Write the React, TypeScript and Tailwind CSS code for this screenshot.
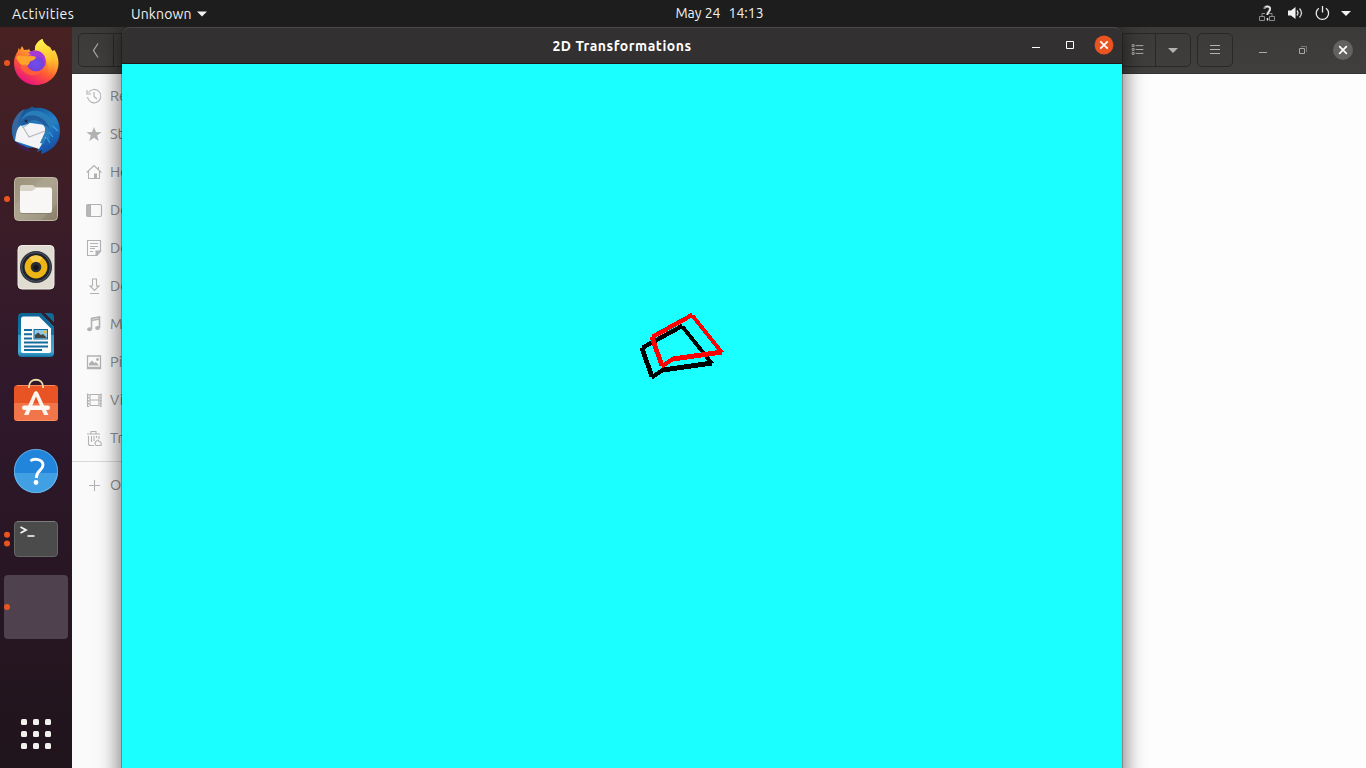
import type { ReactNode } from "react";

const ui = "font-['Ubuntu','Noto_Sans',sans-serif]";

type Point = [number, number];

const originalShape: Point[] = [[642, 348], [682, 326], [711.5, 363], [663, 370], [652, 377]];
const movedShape: Point[] = [[652, 337], [692, 315], [721.5, 352], [673, 359], [662, 366]];

/* Wide lines widen along x when steep and along y when shallow. */
function Loop({ points, color }: { points: Point[]; color: string }) {
  return (
    <g fill={color}>
      {points.map(([x1, y1], i) => {
        const [x2, y2] = points[(i + 1) % points.length];
        const steep = Math.abs(y2 - y1) > Math.abs(x2 - x1);
        const dx = steep ? 2.5 : 0;
        const dy = steep ? 0 : 2.5;
        return (
          <polygon
            key={i}
            points={`${x1 - dx},${y1 - dy} ${x2 - dx},${y2 - dy} ${x2 + dx},${y2 + dy} ${x1 + dx},${y1 + dy}`}
          />
        );
      })}
    </g>
  );
}

function Slot({ y, dots = 0, active = false, children }: { y: number; dots?: number; active?: boolean; children?: ReactNode }) {
  return (
    <div className={active ? "h-16 w-16 shrink-0 rounded bg-[#4f414e]" : "h-16 w-16 shrink-0"}>
      <svg width="64" height="64" viewBox={`4 ${y} 64 64`} className="block overflow-visible">
        {children}
        {dots === 1 && <circle cx="7" cy={y + 32} r="3" fill="#e95420" />}
        {dots === 2 && (
          <>
            <circle cx="7" cy={y + 27.7} r="3" fill="#e95420" />
            <circle cx="7" cy={y + 36.4} r="3" fill="#e95420" />
          </>
        )}
      </svg>
    </div>
  );
}

function Dock() {
  return (
    <nav className="flex w-[72px] shrink-0 flex-col items-center gap-1 bg-linear-to-b from-[#482122] via-[#2f182b] via-50% to-[#20141b] pt-1">
      <Slot y={31} dots={1}>
        <defs>
          <linearGradient id="fx" x1="0.85" y1="0" x2="0.3" y2="1">
            <stop offset="0" stopColor="#fff44f" />
            <stop offset="0.35" stopColor="#ffb52b" />
            <stop offset="0.65" stopColor="#ff5a33" />
            <stop offset="1" stopColor="#e80d86" />
          </linearGradient>
          <linearGradient id="fxt" x1="0.4" y1="0" x2="0.6" y2="1">
            <stop offset="0" stopColor="#fff34d" />
            <stop offset="0.6" stopColor="#ffc22e" />
            <stop offset="1" stopColor="#ff7a2c" stopOpacity="0.2" />
          </linearGradient>
          <radialGradient id="fxp" cx="0.5" cy="0.6" r="0.6">
            <stop offset="0" stopColor="#6b50f0" />
            <stop offset="0.6" stopColor="#7542d8" />
            <stop offset="1" stopColor="#b833e1" />
          </radialGradient>
        </defs>
        <path d="M21.5 47C22 45.500 22.500 46 24 50C25.500 49.500 27 50 28 50L29 48.500L30 51C32 51 33.500 51 35 50C34.500 45 38 41 42.500 39C43 42.500 46 45 50 47C51 49 52 50 52.500 51L54.500 50C57 54 58.500 58 58.500 63C58.500 75.500 48.500 85 36 85C24 85 14 75.500 14 63C14 58 15.500 55 18 51L18.500 48L20 50Z" fill="url(#fx)" />
        <path d="M35 50C34.500 45 38 41 42.500 39C43 43 47 46 50 49C56 57 55 67 47 76C51 66 47 56 35 50Z" fill="url(#fxt)" />
        <circle cx="36" cy="62" r="9.500" fill="url(#fxp)" />
        <path d="M28 53C33 49 41 50 44.500 56C47 61 45 67 45 67C45 61 42 56 37 57Z" fill="#a738d8" />
        <path d="M16 57C20 54 25 56 28 56.500C31 55 34 56.500 36 57C36 59 33 60.500 30 61.500C29 65 27 66 25 66C21 66 18 62 16 57Z" fill="#ffa42a" />
        <path d="M26 64C28 71 36 74 43 69C38 78 24 77 20 66Z" fill="#ff6538" opacity="0.75" />
      </Slot>
      <Slot y={99}>
        <defs>
          <linearGradient id="tb" x1="0.2" y1="0" x2="0.8" y2="1">
            <stop offset="0" stopColor="#154b8c" />
            <stop offset="0.5" stopColor="#2380ca" />
            <stop offset="1" stopColor="#17499e" />
          </linearGradient>
        </defs>
        <path d="M30 108L32 106.500L35 108C48 106 60 116 60 131C60 143 52 151 41 154L42 150L37 152L39 146C29 150 21 147 14 140C9 127 13 112 30 108Z" fill="url(#tb)" />
        <path d="M16 142C19 148 25 151.500 31 152L26 147Z" fill="#402054" />
        <path d="M12 129C13 120 18 111 25 109C20 116 17 122 18 130L14 136Z" fill="#39669d" />
        <path d="M19 127L24 122L45 125L46 137L39 149L15 141C16 136 16 131 19 127Z" fill="#f4f4f6" />
        <path d="M23 127L29 137L45 131" stroke="#b4b7bd" strokeWidth="1.100" fill="none" />
        <path d="M23 117C28 109 39 109 47 115C52 119 54 122 56 121L58 124L51 124L56 129L48 127L50 139L45 137L44 144L40 143L45 132C47 124 38 121 31 122L23 128C20 123 21 119 23 117Z" fill="#297eb9" />
        <path d="M24 118C30 113 39 115 45 121L50 128L44 125C37 119 31 119 27 124L21 126C20 122 22 119 24 118Z" fill="#205c9e" />
        <path d="M21 126L28 124L23 128Z" fill="#b8d3e5" /><circle cx="26" cy="121" r="1.500" fill="#182d51" />
        <path d="M49 132L53 137M47 138L50 143M53 126L58 131" stroke="#2ea5df" strokeWidth="1.200" />
      </Slot>
      <Slot y={167} dots={1}>
        <defs>
          <linearGradient id="fm" x1="0" y1="0" x2="1" y2="1">
            <stop offset="0" stopColor="#9c927b" />
            <stop offset="0.5" stopColor="#a9a08b" />
            <stop offset="1" stopColor="#887e69" />
          </linearGradient>
        </defs>
        <rect x="14.500" y="177.500" width="43" height="43" rx="4" fill="url(#fm)" stroke="#c0b8a5" strokeWidth="1" />
        <path d="M15 205L43 178H57V204L41 220H15Z" fill="#bdb5a3" opacity="0.25" />
        <path d="M20 200V187Q20 185 22 185H32Q34 185 35 187H50Q52 187 52 190V200Z" fill="#d9d3c6" />
        <path d="M20 191H31Q33 191 34 189.500Q35 188 37 188H50Q52 188 52 190V210Q52 213 49.500 213H22.500Q20 213 20 210Z" fill="#f8f7f5" />
        <path d="M21 213.500H51" stroke="#7a725f" opacity="0.6" />
      </Slot>
      <Slot y={235}>
        <rect x="18" y="245.500" width="36" height="43.500" rx="4" fill="#e1dcd2" stroke="#f0ede7" />
        <circle cx="36" cy="267" r="16" fill="#30363e" />
        <circle cx="36" cy="267" r="14.400" fill="#1d222e" stroke="#59606a" strokeWidth="0.800" />
        <circle cx="36" cy="267" r="11.400" fill="#edb514" />
        <path d="M29.500 257.500A11.400 11.400 0 0 1 42.500 257.500L36 267Z" fill="#f8cf4b" />
        <circle cx="36" cy="267" r="5.300" fill="#2b2d32" /><circle cx="36" cy="267.500" r="2.700" fill="#15171b" />
      </Slot>
      <Slot y={303}>
        <defs>
          <linearGradient id="wr" x1="0" y1="0" x2="0" y2="1">
            <stop offset="0" stopColor="#0d6594" />
            <stop offset="0.490" stopColor="#1475a5" />
            <stop offset="0.500" stopColor="#3498c5" />
            <stop offset="0.880" stopColor="#48a8d2" />
            <stop offset="1" stopColor="#1274a6" />
          </linearGradient>
        </defs>
        <path d="M22 313H41L54 326.500V353Q54 357 50 357H22Q18 357 18 353V317Q18 313 22 313Z" fill="url(#wr)" />
        <path d="M23.500 316.500H39L51 328.500V351Q51 353 49 353H23Q21 353 21 351V319Q21 316.500 23.500 316.500Z" fill="#fbfbfb" />
        <path d="M44.500 313H50Q54 313 54 317V322.500Z" fill="#116995" />
        <path d="M24 330H32M24 334.200H32M24 338.500H32M24 342.500H48M24 346.500H48M24 350H42" stroke="#126d9c" strokeWidth="1.900" />
        <rect x="34" y="329.500" width="13.500" height="9.500" fill="#91c8e7" stroke="#126c9b" />
        <path d="M35 338V335L38 332.500L41 335L43 334L47 338Z" fill="#454744" /><circle cx="45" cy="332" r="1.600" fill="#efbd20" />
      </Slot>
      <Slot y={371}>
        <rect x="14" y="385" width="44" height="36" rx="3.500" fill="#e95424" />
        <path d="M14 403H58V417.500Q58 421 54.500 421H17.500Q14 421 14 417.500Z" fill="#f27549" />
        <path d="M17 385.500H55M17 420.500H55" stroke="#ff9567" strokeWidth="0.800" />
        <path d="M29 388V386.500C29 377.500 43 377.500 43 386.500V388" fill="none" stroke="#efdcaa" strokeWidth="1.800" />
        <path d="M24 415L34 392.500Q36 389.500 38 392.500L48.500 415H44L36 396.500L28.500 415Z" fill="#fbf3ed" />
        <rect x="22" y="405.500" width="28" height="4.500" rx="2.200" fill="#fff8f3" />
      </Slot>
      <Slot y={439}>
        <circle cx="36" cy="471" r="22" fill="#2185dc" />
        <path d="M14 473H58C57 485 48 493 36 493S15 485 14 473Z" fill="#419fe4" />
        <circle cx="36" cy="471" r="21.600" fill="none" stroke="#83bce8" strokeWidth="0.700" />
        <path d="M30.500 461C34 458 43 459 43 465C43 470.500 36.500 470.500 36.500 477V478" fill="none" stroke="#fff" strokeWidth="2.900" />
        <circle cx="36" cy="482.500" r="2.400" fill="#fff" />
      </Slot>
      <Slot y={507} dots={2}>
        <rect x="14.500" y="521.500" width="43" height="35" rx="3.500" fill="#4b4b4b" stroke="#656765" />
        <path d="M17 521.500H55" stroke="#7c7e7b" /><path d="M20.500 527L26 530L20.500 533" fill="none" stroke="#f5f5f5" strokeWidth="1.800" />
        <path d="M27.500 536H34.500" stroke="#f5f5f5" strokeWidth="1.600" />
      </Slot>
      <Slot y={575} dots={1} active />
      <div className="mt-auto mb-[19px] grid grid-cols-3 gap-[6px]">
        {Array.from({ length: 9 }, (_, i) => <span key={i} className="h-[6px] w-[6px] rounded-[1.500px] bg-[#f2f0ec]" />)}
      </div>
    </nav>
  );
}

const places: { name: string; icon: ReactNode }[] = [
  { name: "Recent", icon: <><path d="M2.500 4.500A6.700 6.700 0 1 1 1.500 9M1 2V6H5M8 4V8.500L11 11" /></> },
  { name: "Starred", icon: <path d="M8 1L10 6L15.500 6.200L11.200 9.500L12.700 15L8 11.800L3.300 15L4.800 9.500L.5 6.200L6 6Z" fill="#b2b2b2" stroke="none" /> },
  { name: "Home", icon: <><path d="M.7 8.500L8 1.500L15.300 8.500M2.500 7.500V14.500H13.500V7.500M12.500 5V3" /><path d="M8 9.500H11V14.500H8Z" fill="#b2b2b2" stroke="none" /></> },
  { name: "Desktop", icon: <><rect x=".7" y="2.500" width="14.800" height="12" rx="1.500" /><path d="M1 3H4.500V14H1Z" fill="#b8b8b8" /></> },
  { name: "Documents", icon: <><path d="M1.500.5H14.500V11L11 15.500H1.500ZM4 3.500H12M4 6.500H12M4 8.500H9M4 11.500H7" /><path d="M10 15V11H14.500Z" fill="#b8b8b8" /></> },
  { name: "Downloads", icon: <path d="M6.500 1H10.500V8H13L8.500 12.500L4 8H6.500ZM4 15.500H13" /> },
  { name: "Music", icon: <><path d="M5.500 13V2.500L13.500 1V12M5.500 4.500L13.500 3" strokeWidth="1.600" /><ellipse cx="3.500" cy="13.300" rx="2.400" ry="2" fill="#b2b2b2" stroke="none" /><ellipse cx="11.500" cy="12" rx="2.400" ry="2" fill="#b2b2b2" stroke="none" /></> },
  { name: "Pictures", icon: <><path d="M1.500 2H14.500V14.500H1.500ZM2 13.500H14" strokeWidth="1.300" /><path d="M3 11.500V9.500L6 6.500L8.500 9L10 8L13 11.500Z" fill="#b2b2b2" stroke="none" /><circle cx="11.500" cy="5.500" r="1.400" fill="#b2b2b2" stroke="none" /></> },
  { name: "Videos", icon: <><path d="M1.500 1.500V15M4 2V14M13 2V14M15 1.500V15M4 2.500H13M4 8H13M4 13.500H13" /><path d="M2.500 2V15M14.500 2V15" strokeDasharray="1.500 1.500" strokeWidth="1.500" /></> },
  { name: "Trash", icon: <><path d="M1 4H14M5 3.500V1.500H10V3.500M2.500 6V13.500Q2.500 15.500 4.500 15.500H8M13 6V9M5.500 6V12M8 6V11M10.500 6V8" /><path d="M10 15.500Q8 13 10 11.500Q12 8.500 13 11.500Q16 12 15 15.500Z" /></> },
];

function Glyph({ children }: { children: ReactNode }) {
  return <svg width="17" height="17" viewBox="0 0 17 17" fill="none" stroke="#b2b2b2" strokeWidth="1.100" className="shrink-0">{children}</svg>;
}

function Sidebar() {
  return (
    <aside className="w-[188px] bg-[#fafafa] pt-[3px] text-[14.500px] text-[#8e8e8e]">
      {places.map((p) => (
        <div key={p.name} className="flex h-[38px] items-center gap-[7px] pl-[14px]">
          <Glyph>{p.icon}</Glyph>
          <span>{p.name}</span>
        </div>
      ))}
      <div className="mt-[4px] h-px bg-[#d8d8d8]" />
      <div className="mt-[4px] flex h-[38px] items-center gap-[7px] pl-[14px]">
        <Glyph><path d="M8.500 3V14M3 8.500H14" /></Glyph>
        <span className="whitespace-nowrap">Other Locations</span>
      </div>
    </aside>
  );
}

function FilesWindow() {
  return (
    <section className="flex min-w-0 flex-1 flex-col bg-[#fdfdfd]">
      <header className="flex h-[47px] items-start justify-between border-b border-[#353432] bg-linear-to-b from-[#3b3a38] to-[#403f3d] pt-[6px]">
        <div className="ml-[6px] flex h-[34px] w-[70px] rounded-[5px] border border-[#292827]">
          <svg width="35" height="32" fill="none" className="border-r border-[#292827]"><path d="M19 9.500L14.500 16.500L19 23.500" stroke="#a5a4a3" strokeWidth="1.300" /></svg>
        </div>
        <div className="flex">
          <div className="flex h-[34px] w-[71px] rounded-[5px] border border-[#292827]">
            <svg width="35" height="32" viewBox="1121 34 35 32" fill="none" stroke="#b3b2b1" className="box-border border-r border-[#292827]">
              <path d="M1136 45.500H1144M1136 49.500H1144M1136 53.500H1144M1132.500 44.500H1134.500V46.500H1132.500ZM1132.500 48.500H1134.500V50.500H1132.500ZM1132.500 52.500H1134.500V54.500H1132.500Z" />
            </svg>
            <svg width="34" height="32" viewBox="1156 34 34 32"><path d="M1168 48H1178L1173 53Z" fill="#b3b2b1" /></svg>
          </div>
          <div className="ml-[6px] h-[34px] w-[36px] rounded-[5px] border border-[#292827]">
            <svg width="34" height="32" viewBox="1198 34 34 32" stroke="#b3b2b1"><path d="M1210 45.500H1220M1210 49.500H1220M1210 53.500H1220" /></svg>
          </div>
          <svg width="133" height="34" viewBox="1233 33 133 34" fill="none" stroke="#a9a8a7">
            <path d="M1259 52.500H1267M1299.500 48.500H1304.500V53.500H1299.500Z" />
            <path d="M1301 46.500H1306.500V52" stroke="#777674" />
            <circle cx="1343" cy="50" r="10" fill="#636260" stroke="none" />
            <path d="M1339.200 46.200L1346.800 53.800M1346.800 46.200L1339.200 53.800" stroke="#fff" strokeWidth="1.700" />
          </svg>
        </div>
      </header>
      <div className="flex flex-1"><Sidebar /></div>
    </section>
  );
}

function DrawingWindow() {
  return (
    <section className="absolute top-[27px] left-[122px] flex h-[800px] w-[1000px] flex-col rounded-t-[8px] shadow-[0_0_0_1px_rgba(0,0,0,0.25),0_3px_22px_2px_rgba(0,0,0,0.55)]">
      <header className="grid h-[37px] shrink-0 grid-cols-[1fr_auto_1fr] items-center rounded-t-[8px] border-t border-b border-t-[#4a4849] border-b-[#1b1a1a] bg-[#333031]">
        <span />
        <h1 className="text-[14px] leading-none font-bold tracking-[0.530px] text-white">2D Transformations</h1>
        <svg width="100" height="35" viewBox="1022 28 100 35" fill="none" stroke="#fff" className="justify-self-end">
          <path d="M1032 47.500H1040" />
          <path d="M1066.500 41.500H1073.500V48.500H1066.500Z" />
          <circle cx="1104" cy="45" r="9.400" fill="#e95420" stroke="none" />
          <path d="M1100.300 41.300L1107.700 48.700M1107.700 41.300L1100.300 48.700" strokeWidth="1.700" />
        </svg>
      </header>
      <div className="flex-1 bg-[#1affff]">
        <svg width="1000" height="704" viewBox="122 64 1000 704" shapeRendering="crispEdges" className="block">
          <Loop points={originalShape} color="#000" />
          <Loop points={movedShape} color="#f00" />
        </svg>
      </div>
    </section>
  );
}

function TopBar() {
  return (
    <header className="relative z-10 grid h-[27px] shrink-0 grid-cols-[1fr_auto_1fr] items-center bg-[#1d1d1d] text-[14px] leading-none text-[#f2f2f2]">
      <div className="flex items-center pl-3">
        <span className="w-[119px] tracking-[0.500px]">Activities</span>
        <span className="tracking-[0.150px]">Unknown</span>
        <svg width="10" height="6" className="ml-[5px]"><path d="M0 .5H10L5 5.500Z" fill="#f2f2f2" /></svg>
      </div>
      <div className="relative left-[36.500px] flex gap-[8px] pb-px whitespace-nowrap"><span>May 24</span><span>14:13</span></div>
      <svg width="110" height="27" viewBox="1256 0 110 27" fill="none" className="justify-self-end">
        <path d="M1259.500 16.500H1264.500V20.500H1259.500ZM1269.500 16.500H1274.500V20.500H1269.500ZM1262 16V13.500H1265M1269 13.500H1272V16" stroke="#8b8b8b" />
        <path d="M1264.500 9C1264.500 5.500 1270 5.500 1270 9C1270 12 1267 12 1267 15" stroke="#8b8b8b" strokeWidth="2.200" />
        <path d="M1265.500 7.200C1268 5.500 1271 7 1270 9.800C1269.500 11.500 1267.500 12 1267.500 15M1267.500 18V20.500" stroke="#e9e9e9" strokeWidth="1.500" />
        <path d="M1288 10.500H1291L1295.500 7V19L1291 15.500H1288Z" fill="#f2f2f2" />
        <path d="M1297 10.500Q1299 13 1297 15.500M1299.500 8.500Q1303.500 13 1299.500 17.500" stroke="#d5d5d5" strokeWidth="1.300" />
        <path d="M1318.800 8.200A6.200 6.200 0 1 0 1326 8.200M1322.500 6V12.500" stroke="#ececec" strokeWidth="1.300" />
        <path d="M1341 11H1351L1346 16Z" fill="#f2f2f2" />
      </svg>
    </header>
  );
}

export default function App() {
  return (
    <main className={`${ui} relative flex h-[768px] w-[1366px] flex-col overflow-hidden`}>
      <TopBar />
      <div className="flex min-h-0 flex-1">
        <Dock />
        <FilesWindow />
      </div>
      <DrawingWindow />
    </main>
  );
}
